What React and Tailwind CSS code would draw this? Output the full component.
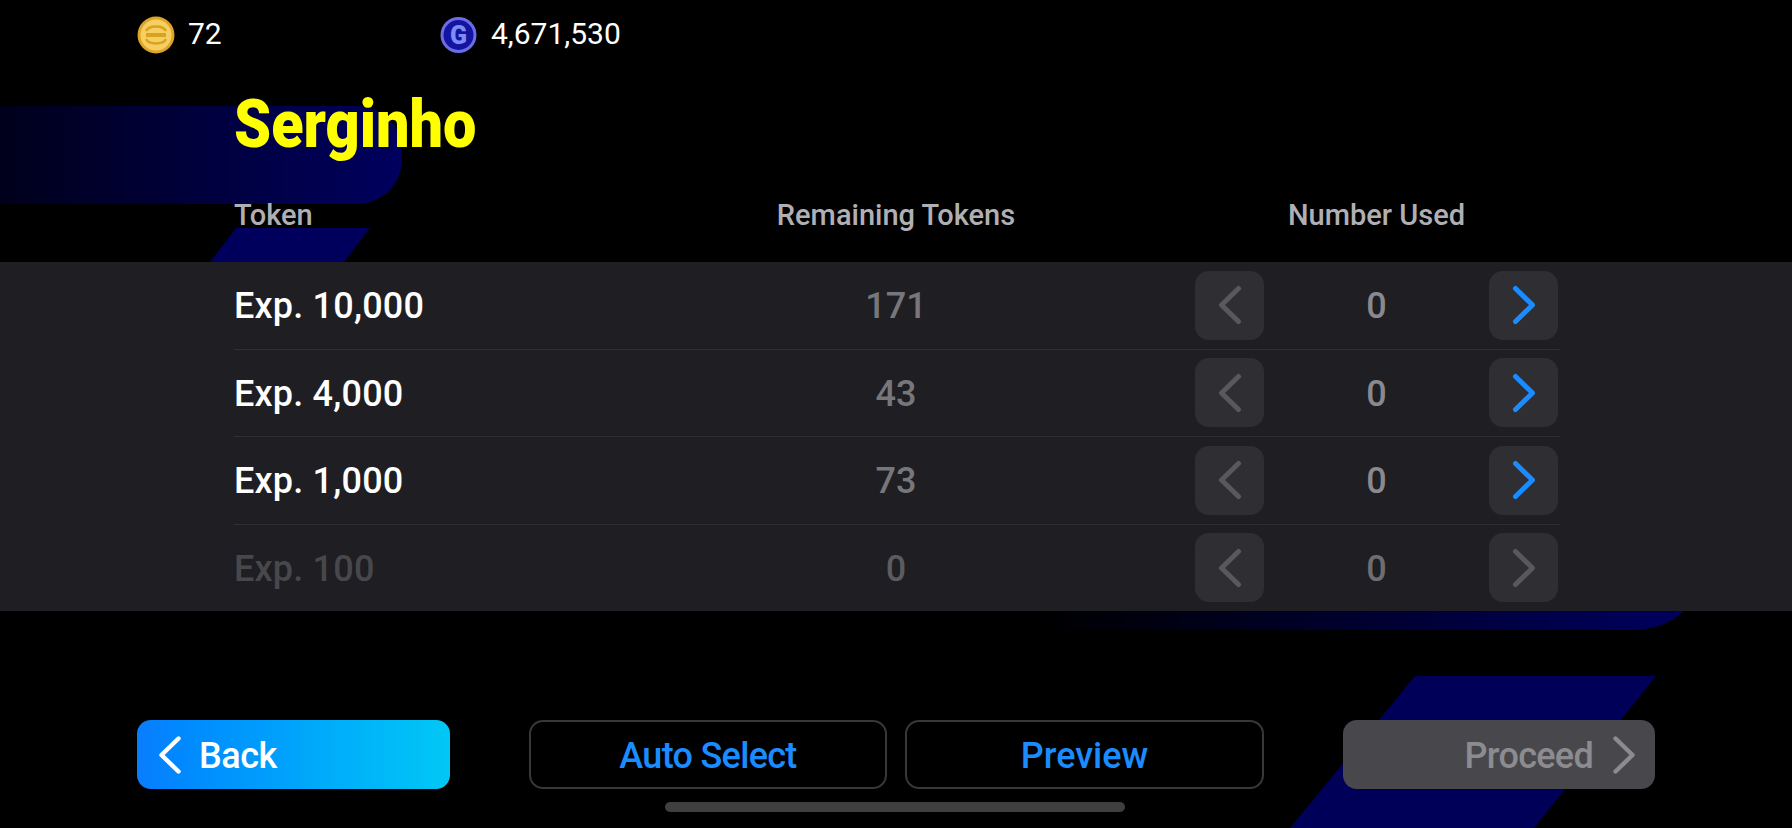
const rows = [
  { label: "Exp. 10,000", remaining: "171", active: true },
  { label: "Exp. 4,000", remaining: "43", active: true },
  { label: "Exp. 1,000", remaining: "73", active: true },
  { label: "Exp. 100", remaining: "0", active: false },
];

function Backdrop() {
  return (
    <svg className="absolute inset-0 w-full h-full" viewBox="0 0 1792 828">
      <defs>
        <linearGradient id="fadeLeft" x1="0" x2="1" y1="0" y2="0">
          <stop offset="0" stopColor="#00001c" />
          <stop offset="1" stopColor="#00005e" />
        </linearGradient>
        <linearGradient id="fadeRight" x1="0" x2="1" y1="0" y2="0">
          <stop offset="0" stopColor="#000000" />
          <stop offset="1" stopColor="#00005e" />
        </linearGradient>
      </defs>
      <path d="M0 106H357C382 106 402 126 402 151V159C402 184 382 204 357 204H0Z" fill="url(#fadeLeft)" />
      <path d="M236 228H370L344 262H210Z" fill="#00005c" />
      <path d="M1030 611H1684C1670 624 1652 630 1632 630H1030Z" fill="url(#fadeRight)" />
      <path d="M1415 676H1656L1534 828H1290Z" fill="#000058" />
    </svg>
  );
}

function GoldCoin() {
  return (
    <svg width="38" height="38" viewBox="0 0 38 38">
      <circle cx="19" cy="19" r="18.5" fill="#dfa526" />
      <circle cx="19" cy="19" r="15.5" fill="#f6cf62" />
      <path d="M9 15C12 9 26 9 29 15" fill="none" stroke="#d9a21f" strokeWidth="2.5" />
      <path d="M9 23C12 29 26 29 29 23" fill="none" stroke="#d9a21f" strokeWidth="2.5" />
      <rect x="9" y="17" width="20" height="4" fill="#d9a21f" />
    </svg>
  );
}

function GpCoin() {
  return (
    <svg width="37" height="38" viewBox="0 0 37 38">
      <circle cx="18.5" cy="19" r="18" fill="#6a6de6" />
      <circle cx="18.5" cy="19" r="15" fill="#1414a0" />
      <text x="18.5" y="27.5" textAnchor="middle" fontFamily="Roboto, sans-serif" fontWeight="900" fontSize="25" fill="#7f8cf5">
        G
      </text>
    </svg>
  );
}

// thin pointed chevron, the lucide ones are too squat for this game UI
function Chevron({ dir, color, weight = 5 }) {
  return (
    <svg width="24" height="40" viewBox="0 0 24 40" fill="none" className="shrink-0">
      <path
        d={dir === "left" ? "M20.5 3.5L3.5 20L20.5 36.5" : "M3.5 3.5L20.5 20L3.5 36.5"}
        stroke={color}
        strokeWidth={weight}
        strokeLinecap="round"
        strokeLinejoin="round"
      />
    </svg>
  );
}

function StepButton({ dir, color }) {
  return (
    <div className="w-[69px] h-[69px] rounded-[14px] bg-[#2e2e33] flex items-center justify-center">
      <Chevron dir={dir} color={color} />
    </div>
  );
}

export default function App() {
  return (
    <div className="relative w-[1792px] h-[828px] bg-black overflow-hidden font-['Roboto',sans-serif]">
      <Backdrop />
      <div className="relative flex flex-col h-full">
        {/* Currencies */}
        <div className="flex items-center h-[37px] mt-[16px] pl-[137px] text-white text-[30px]">
          <GoldCoin />
          <span className="ml-[13px] w-[252px] mb-[2px]">72</span>
          <GpCoin />
          <span className="ml-[14px] mb-[2px]">4,671,530</span>
        </div>

        <h1 className="h-[83px] mt-[33px] pl-[234px] text-[#ffff00] text-[66px] leading-[78px] font-black origin-[234px_center] scale-x-[0.9]">
          Serginho
        </h1>

        {/* Column headings */}
        <div className="grid grid-cols-[522px_280px_1fr] items-center h-[43px] mt-[25px] pl-[234px] pr-[232px] text-[#b0b0b4] text-[29px] font-medium">
          <span>Token</span>
          <span className="text-center">Remaining Tokens</span>
          <span className="pl-[159px] pr-[2px] text-center">Number Used</span>
        </div>

        {/* Token rows */}
        <div className="flex flex-col h-[349px] mt-[25px] pl-[234px] pr-[232px] bg-[#1e1e23]">
          {rows.map((row, i) => (
            <div
              key={row.label}
              className={`flex-1 grid grid-cols-[522px_280px_1fr] items-center text-[36px] font-medium ${
                i < rows.length - 1 ? "border-b border-[#2e2e33]" : ""
              }`}
            >
              <span className={`pt-[2px] tracking-[0.2px] ${row.active ? "text-white" : "text-[#48484c]"}`}>{row.label}</span>
              <span className={`pt-[2px] text-center ${row.active ? "text-[#77777b]" : "text-[#5c5c60]"}`}>{row.remaining}</span>
              <div className="pl-[159px] pr-[2px] flex items-center justify-between">
                <StepButton dir="left" color="#58585d" />
                <span className={`pt-[2px] ${row.active ? "text-[#8a8a8e]" : "text-[#6e6e72]"}`}>0</span>
                <StepButton dir="right" color={row.active ? "#1a8cff" : "#58585d"} />
              </div>
            </div>
          ))}
        </div>

        {/* Actions */}
        <div className="flex items-center h-[69px] mt-[109px] pl-[137px] text-[36px] font-medium">
          <button className="w-[313px] h-full rounded-[14px] bg-gradient-to-r from-[#0a7dff] to-[#00c8f5] text-white flex items-center pl-[21px] tracking-[-0.5px]">
            <Chevron dir="left" color="#ffffff" weight={4.4} />
            <span className="ml-[17px] pt-[2px]">Back</span>
          </button>
          <button className="w-[358px] h-full ml-[79px] pt-[2px] rounded-[14px] border-2 border-[#38383c] bg-black text-[#1a8cff] tracking-[-0.7px]">
            Auto Select
          </button>
          <button className="w-[359px] h-full ml-[18px] pt-[2px] rounded-[14px] border-2 border-[#38383c] bg-black text-[#1a8cff]">
            Preview
          </button>
          <button className="w-[312px] h-full ml-[79px] rounded-[14px] bg-[#48484c] text-[#8c8c90] flex items-center justify-end pr-[19px] tracking-[-0.7px]">
            <span className="mr-[19px] pt-[2px]">Proceed</span>
            <Chevron dir="right" color="#8c8c90" weight={4.4} />
          </button>
        </div>

        <div className="w-[460px] h-[10px] mt-[13px] ml-[665px] rounded-full bg-[#3f3f3f]" />
      </div>
    </div>
  );
}
